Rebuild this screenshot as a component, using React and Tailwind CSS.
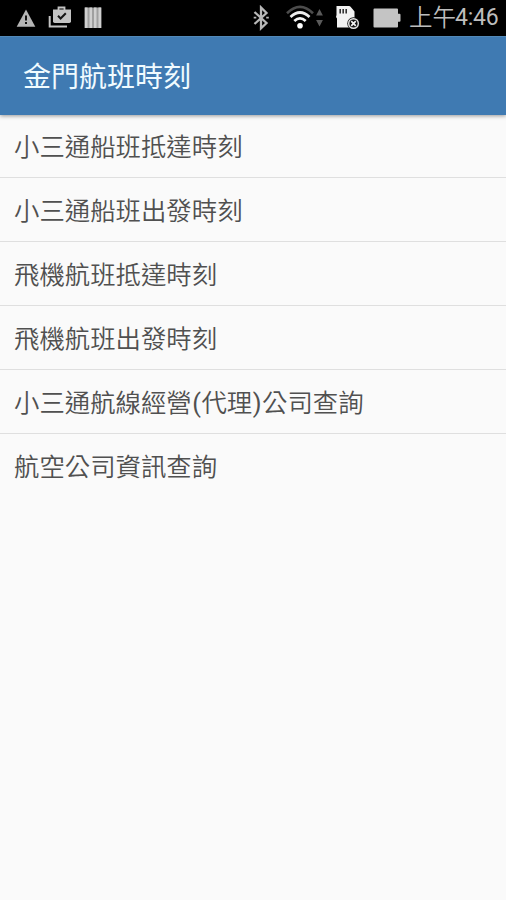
const items = [
  '小三通船班抵達時刻',
  '小三通船班出發時刻',
  '飛機航班抵達時刻',
  '飛機航班出發時刻',
  '小三通航線經營(代理)公司查詢',
  '航空公司資訊查詢',
];

function WarningIcon() {
  return (
    <svg className="ml-4 mt-[9px] h-[18px] w-5" viewBox="0 0 20 18">
      <path d="M10 .5 19.3 17.8H.7Z" fill="#b5b5b5" />
      <path d="M9 6.5h2v5H9zM9 13h2v2H9z" fill="#111" />
    </svg>
  );
}

function ShopIcon() {
  return (
    <svg className="ml-3 mt-[5px] h-[23px] w-6" viewBox="0 0 24 23" fill="none">
      <path d="M1.7 11v10.5H19" stroke="#c4c4c4" strokeWidth="2" />
      <path d="M10.5 5V2.5h6V5" stroke="#c4c4c4" strokeWidth="1.8" />
      <path d="M5 4.5h18v11.8q0 1.7-1.7 1.7H6.7Q5 18 5 16.3Z" fill="#c4c4c4" />
      <path d="m10 10.7 2.6 2.8 5.2-5.3" stroke="#151515" strokeWidth="2" />
    </svg>
  );
}

function BarsIcon() {
  return (
    <svg className="ml-3 mt-[7px] h-[22px] w-[18px]" viewBox="0 0 18 22">
      <path d="M.5.5h17V21H.5Z" fill="#a0a0a0" />
      <path d="M1 .5h2.5V21H1zM5.5.5H8V21H5.5zM10 .5h2.5V21H10zM14.5.5H17V21h-2.5z" fill="#d0d0d0" />
    </svg>
  );
}

function BluetoothIcon() {
  return (
    <svg className="mt-[5px] h-[26px] w-4" viewBox="0 0 16 26" fill="none" stroke="#b8b8b8" strokeWidth="2.3">
      <path d="m1.5 7 12 11L8 23.3V2.5L13.500 8l-12 11" />
      <path d="M.7 12.7h2.6M13.2 12.7h2.6" strokeWidth="1.8" />
    </svg>
  );
}

function WifiIcon() {
  return (
    <svg className="ml-[17px] mt-[5px] h-6 w-[38px]" viewBox="0 0 38 24" fill="none">
      <path d="M1 8.3Q14 -4.5 27 8.3" stroke="#4c4c4c" strokeWidth="2.6" />
      <path d="M4.5 12q9.5-9 19 0" stroke="#ededed" strokeWidth="2.7" />
      <path d="M8.3 16q5.7-5.4 11.4 0" stroke="#f4f4f4" strokeWidth="2.7" />
      <circle cx="14" cy="20.7" r="2.8" fill="#fff" />
      <path d="m33.5 4 3.4 6.4h-6.8ZM33.5 21.5l3.4-6.4h-6.8Z" fill="#5a5a5a" />
    </svg>
  );
}

function SdCardIcon() {
  return (
    <svg className="ml-3 mt-[5px] h-6 w-6" viewBox="0 0 24 24" fill="none">
      <path d="M.5 1h12.500q1 0 1.800 1l3.700 4.500v16H1v-9l-1-1.500L.5 10Z" fill="#f2f2f2" />
      <path d="M4.200 4v4.500M7.200 4v4.500M10.200 4v4.500" stroke="#333" strokeWidth="1.600" />
      <circle cx="17.500" cy="18.500" r="6.200" fill="#111" />
      <circle cx="17.500" cy="18.500" r="4.800" stroke="#e8e8e8" strokeWidth="1.400" />
      <path d="m15.200 16.200 4.600 4.600m0-4.600-4.600 4.600" stroke="#f2f2f2" strokeWidth="1.700" />
    </svg>
  );
}

function BatteryIcon() {
  return (
    <svg className="ml-[13px] mt-2 h-5 w-[28px]" viewBox="0 0 28 20">
      <path d="M1.500.5h22.500q1 0 1 1v4.300h1.500q1 0 1 1v5.900q0 1-1 1H25v4.800q0 1-1 1H1.500q-1 0-1-1v-17q0-1 1-1Z" fill="#c4c4c4" />
    </svg>
  );
}

// Brackets get a little side bearing so they don't crowd the ideographs.
function Label({ text }) {
  return text
    .split(/([()])/)
    .map((part, i) =>
      part === '(' || part === ')' ? (
        <span key={i} className="px-[0.5px] font-normal">{part}</span>
      ) : (
        <span key={i}>{part}</span>
      )
    );
}

export default function App() {
  return (
    <div lang="zh-TW" className="flex h-[900px] w-[506px] flex-col overflow-hidden bg-[#fafafa] font-['Noto_Sans_CJK_TC',sans-serif]">
      <div className="flex h-9 shrink-0 items-start bg-black">
        <WarningIcon />
        <ShopIcon />
        <BarsIcon />
        <div className="flex-1" />
        <BluetoothIcon />
        <WifiIcon />
        <SdCardIcon />
        <BatteryIcon />
        <div className="ml-[8px] flex w-[97px] whitespace-nowrap text-[#bdbdbd]">
          <span className="w-[46px] text-[23.5px] font-[350] leading-[33px]">上午</span>
          <span className="pt-px font-[Roboto,sans-serif] text-[23px] font-normal leading-[34px] tracking-[-0.2px]">4:46</span>
        </div>
      </div>
      <header className="z-10 flex h-[79px] shrink-0 items-center border-t border-[#5289b8] bg-[#3f7ab2] pb-[2px] pl-[23px] shadow-[0_1px_4px_rgba(0,0,0,0.4)]">
        <h1 className="text-[28px] font-normal leading-10 text-[#f0fbff]">金門航班時刻</h1>
      </header>
      <ul className="-mt-px">
        {items.map((item) => (
          <li
            key={item}
            className="flex h-16 items-center whitespace-nowrap border-b border-[#dfdfdf] pl-[14px] pt-[3px] font-[Roboto,'Noto_Sans_CJK_TC',sans-serif] text-[25.4px] font-[350] text-[#505050] last:border-b-0"
          >
            <Label text={item} />
          </li>
        ))}
      </ul>
    </div>
  );
}
